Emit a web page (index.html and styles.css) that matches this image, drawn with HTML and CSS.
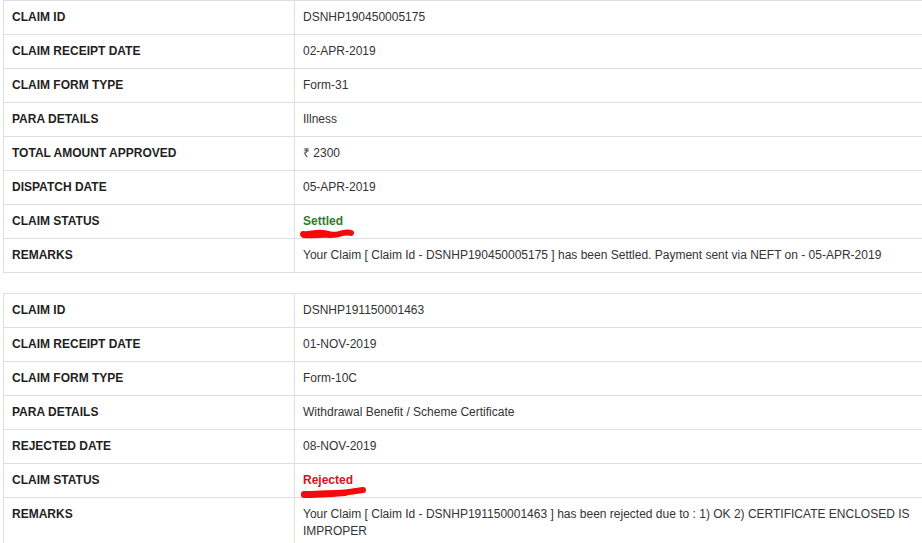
FILE: index.html
```html
<!DOCTYPE html>
<html lang="en">
<head>
    <meta charset="UTF-8">
    <meta name="viewport" content="width=device-width, initial-scale=1.0">
    <title>Claim Status</title>
    <link rel="stylesheet" href="styles.css">
</head>
<body>
    <main class="claims">
        <table class="claim_table">
            <colgroup><col class="col_label"><col></colgroup>
            <tr><th>CLAIM ID</th><td>DSNHP190450005175</td></tr>
            <tr><th>CLAIM RECEIPT DATE</th><td>02-APR-2019</td></tr>
            <tr><th>CLAIM FORM TYPE</th><td>Form-31</td></tr>
            <tr><th>PARA DETAILS</th><td>Illness</td></tr>
            <tr><th>TOTAL AMOUNT APPROVED</th><td>&#8377; 2300</td></tr>
            <tr><th>DISPATCH DATE</th><td>05-APR-2019</td></tr>
            <tr>
                <th>CLAIM STATUS</th>
                <td>
                    <span class="status settled">Settled
                        <svg class="scribble" width="58" height="16" viewBox="0 0 58 16">
                            <path d="M4 9 C10 10, 16 7, 24 8 S 34 11, 40 9 S 49 7, 52 8" />
                            <path d="M5 10 C14 11, 22 9, 32 10" />
                        </svg>
                    </span>
                </td>
            </tr>
            <tr><th>REMARKS</th><td>Your Claim [ Claim Id - DSNHP190450005175 ] has been Settled. Payment sent via NEFT on - 05-APR-2019</td></tr>
        </table>

        <table class="claim_table">
            <colgroup><col class="col_label"><col></colgroup>
            <tr><th>CLAIM ID</th><td>DSNHP191150001463</td></tr>
            <tr><th>CLAIM RECEIPT DATE</th><td>01-NOV-2019</td></tr>
            <tr><th>CLAIM FORM TYPE</th><td>Form-10C</td></tr>
            <tr><th>PARA DETAILS</th><td>Withdrawal Benefit / Scheme Certificate</td></tr>
            <tr><th>REJECTED DATE</th><td>08-NOV-2019</td></tr>
            <tr>
                <th>CLAIM STATUS</th>
                <td>
                    <span class="status rejected">Rejected
                        <svg class="scribble" width="70" height="16" viewBox="0 0 70 16">
                            <path d="M5 10 C16 10, 28 9, 38 9 S 55 7, 64 6" />
                            <path d="M5 11 C18 11, 32 10, 46 9" />
                        </svg>
                    </span>
                </td>
            </tr>
            <tr><th>REMARKS</th><td>Your Claim [ Claim Id - DSNHP191150001463 ] has been rejected due to : 1) OK 2) CERTIFICATE ENCLOSED IS IMPROPER</td></tr>
        </table>
    </main>
</body>
</html>
```

FILE: styles.css
```css
* {
    margin: 0;
    padding: 0;
    box-sizing: border-box;
}

body {
    background-color: #fff;
    color: #333;
    font-family: "Liberation Sans", Arial, sans-serif;
    font-size: 12px;
    overflow: hidden;
}

.claims {
    padding-left: 3px;
}

.claim_table {
    width: 940px;
    border-collapse: collapse;
    table-layout: fixed;
    margin-bottom: 20px;
}

.col_label {
    width: 291px;
}

.claim_table th,
.claim_table td {
    border: 1px solid #dedede;
    padding: 8px;
    line-height: 17px;
    text-align: left;
    vertical-align: top;
}

.claim_table th {
    color: #1f1f1f;
    font-weight: bold;
}

.claim_table td {
    color: #333;
    padding-right: 24px;
}

.status {
    position: relative;
    font-weight: bold;
}

.settled {
    color: #2f7a2a;
}

.rejected {
    color: #d4121e;
}

/* hand-drawn red underline over the status */
.scribble {
    position: absolute;
    left: -4px;
    top: 11px;
    fill: none;
    stroke: #f40a0a;
    stroke-width: 6;
    stroke-linecap: round;
}
```
